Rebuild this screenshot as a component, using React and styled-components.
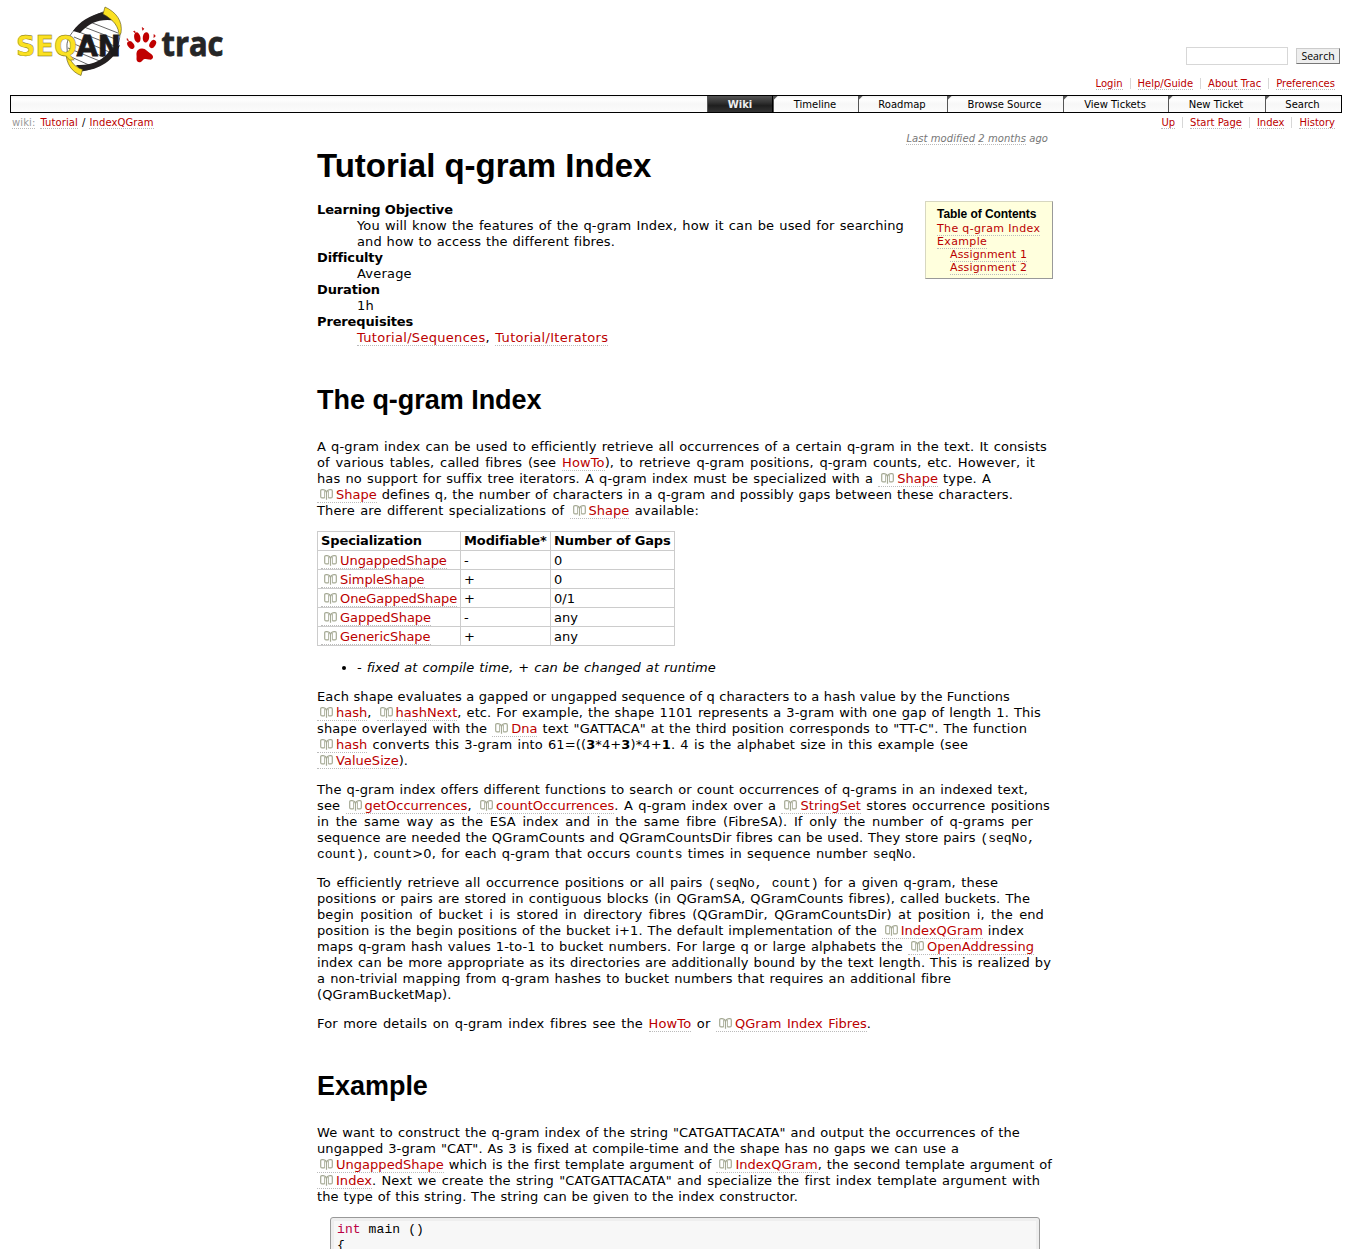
import React from 'react';
import styled, { createGlobalStyle, css } from 'styled-components';

const Global = createGlobalStyle`
  * { box-sizing: border-box; }
  body { margin: 0; background: #fff; color: #000; overflow: hidden; }
`;

const sans = '"DejaVu Sans", "Bitstream Vera Sans", Verdana, sans-serif';
const arial = '"Liberation Sans", Arial, sans-serif';
const mono = '"Liberation Mono", "Courier New", monospace';

const Page = styled.div`
  width: 1352px;
  height: 1249px;
  overflow: hidden;
  font: 13px/16px ${sans};
`;

const A = styled.a`
  color: #b00;
  border-bottom: 1px dotted #bbb;
  text-decoration: none;
`;

/* ---- banner ---- */
const Banner = styled.header`
  display: flex;
  justify-content: space-between;
  height: 95px;
  padding: 0 10px;
`;
const Tools = styled.div`
  display: flex;
  flex-direction: column;
  align-items: flex-end;
  padding-top: 47px;
`;
const SearchForm = styled.form`
  display: flex;
  align-items: center;
  gap: 8px;
  height: 18px;
  margin: 0 2px 13px 0;
`;
const Field = styled.input`
  width: 102px;
  height: 18px;
  border: 1px solid #d7d7d7;
  background: #fff;
  padding: 0;
`;
const Button = styled.button`
  width: 44px;
  height: 16px;
  padding: 0;
  border: 1px solid #ccc;
  border-right-color: #777;
  border-bottom-color: #777;
  background: #eee;
  color: #000;
  font: 10.5px/14px "Open Sans", sans-serif;
`;
const Links = styled.nav`
  display: flex;
  font-size: 10px;
  line-height: 14px;
`;
const LinkItem = styled.span`
  display: block;
  padding: 0 7px;
  height: 11px;
  line-height: 11px;
  border-right: 1px solid #d7d7d7;
  white-space: nowrap;
  &:last-child { border-right: 0; }
`;

/* ---- main navigation ---- */
const MainNav = styled.nav`
  display: flex;
  justify-content: flex-end;
  height: 18px;
  margin: 0 10px;
  border: 1px solid #000;
  background: linear-gradient(#f2f2f2, #fff 3px, #f7f7f7 8px, #fcfcfc);
  font-size: 10px;
  line-height: 15px;
`;
const Tab = styled.a`
  width: ${p => p.$w}px;
  padding: 1px 2px 0 0;
  text-align: center;
  border-left: 1px solid #555;
  background: linear-gradient(135deg, #555 0 2px, transparent 3px);
  ${p => p.$active && css`
    background: linear-gradient(#555, #333 40%, #1f1f1f 60%, #333);
    border-right: 1px solid #000;
    padding-right: 0;
    color: #eee;
    font-weight: bold;
  `}
`;
const SubBar = styled.div`
  display: flex;
  justify-content: space-between;
  height: 18px;
  padding: 4px 10px 0 12px;
  font-size: 10px;
`;
const Crumbs = styled.div`
  line-height: 11px;
  letter-spacing: .1px;
`;
const Muted = styled.span`
  color: #999;
  border-bottom: 1px dotted #bbb;
  margin-right: 5px;
`;
const Slash = styled.span`
  margin: 0 4px;
`;

/* ---- article ---- */
const Article = styled.main`
  width: 1053px;
  padding-left: 317px;
`;
const Modified = styled.div`
  height: 15px;
  padding: 1px 5px 0 0;
  text-align: right;
  font: italic 10px/14px ${sans};
  letter-spacing: .06px;
  color: #777;
`;
const Dotted = styled.span`
  border-bottom: 1px dotted #bbb;
`;
const H1 = styled.h1`
  margin: 0;
  height: 56px;
  font: bold 33px/40px ${arial};
  letter-spacing: -.03px;
  white-space: nowrap;
`;
const H2 = styled.h2`
  margin: 34px 0 19px;
  font: bold 27px/40px ${arial};
  letter-spacing: -.03px;
`;
const Top = styled.section`
  display: flex;
  justify-content: space-between;
  align-items: flex-start;
`;
const Dl = styled.dl`
  margin: 0;
  dt { font-weight: bold; letter-spacing: -.14px; }
  dd { margin: 0 0 0 40px; letter-spacing: .2px; }
`;
const Wide = styled.div`
  letter-spacing: .3px;
  word-spacing: 1px;
`;
const Toc = styled.aside`
  width: 128px;
  height: 78px;
  margin-top: -1px;
  padding: 5px 0 0 11px;
  background: #ffd;
  border: 1px solid;
  border-color: #d7d7c0 #999 #999 #d7d7c0;
  font-size: 11px;
  line-height: 13px;
`;
const TocTitle = styled.h4`
  margin: 0;
  font: bold 12px/15px ${arial};
  letter-spacing: -.06px;
`;
const TocRow = styled.div`
  padding-left: ${p => (p.$sub ? 13 : 0)}px;
  letter-spacing: ${p => (p.$sub ? .15 : .35)}px;
`;
const P = styled.p`
  margin: 0 0 13px;
`;
const Line = styled.span`
  display: block;
  width: ${p => p.$w}px;
  white-space: nowrap;
  text-align-last: justify;
  letter-spacing: .12px;
`;
const Code = styled.code`
  font: 13px/12px ${mono};
  letter-spacing: 0;
`;
const DocLink = styled(A)`
  letter-spacing: .03px;
  svg { margin: 0 3px; vertical-align: -1px; }
`;
const Table = styled.table`
  width: 358px;
  margin: 12px 0 14px;
  table-layout: fixed;
  border-collapse: collapse;
  th, td {
    height: 19px;
    padding: 1px 3px;
    border: 1px solid #ccc;
    text-align: left;
    line-height: 16px;
    white-space: nowrap;
  }
  td { padding: 2px 3px 0; }
  a { letter-spacing: -.05px; }
  th { letter-spacing: -.12px; }
`;
const TableWrap = styled.div`
  margin-top: -1px;
`;
const Col = styled.col`
  width: ${p => p.$w}px;
`;
const Ul = styled.ul`
  margin: 0 0 13px;
  padding-left: 40px;
  font-style: italic;
`;
const Pre = styled.pre`
  width: 710px;
  height: 80px;
  margin: -1px 0 0 13px;
  padding: 4px 6px;
  background: #f7f7f7;
  border: 1px solid #999;
  border-radius: 3px;
  box-shadow: inset 0 0 0 3px #eee;
  font: 13px/16px ${mono};
  letter-spacing: .1px;
`;
const Keyword = styled.span`
  color: #b04;
`;

const Book = () => (
  <svg width="13" height="11" viewBox="0 0 13 11" fill="none" stroke="#a5a994" strokeWidth="1.2">
    <path d="M3.200.700H2C1.100.700.7 1.100.7 2V7.400C.7 8.400 1.100 8.900 2 8.900H4.600M9.800.700H11C11.900.700 12.300 1.100 12.300 2V7.400C12.300 8.400 11.900 8.900 11 8.900H8.400" />
    <path d="M3 .700C4.600.900 6.500 2 6.500 4.500V10.800M10 .700C8.400.900 6.500 2 6.500 4.500" />
    <path d="M4.500 2V9M8.500 2V9" strokeWidth=".8" />
  </svg>
);
const Doc = ({ children }) => <DocLink><Book />{children}</DocLink>;

const LogoSvg = styled.svg`
  display: block;
  overflow: visible;
`;
const Logo = () => (
  <LogoSvg width="220" height="84" viewBox="10 0 220 84">
    <path d="M67 47C66 38 75 23 103 12C115 15 122 22 120 34C119 52 107 66 82 71C72 67 67 59 67 47Z" fill="#fff" stroke="#222" strokeWidth=".7" />
    <path d="M73 31C79 22 90 15 104 12L117 21C103 18 90 21 80 33Z" fill="#231f20" />
    <path d="M120 45C114 60 100 70 81 71L76 65C92 66 104 60 110 50Z" fill="#231f20" />
    <g stroke="#222" strokeWidth=".7">
      <path d="M90 22l28 11M84 27l34 13M79 32l38 15M74 37l40 17M70 42l38 17M68 48l34 14M69 56l20 9" />
    </g>
    <path d="M105 7C116 12 123 21 121 33L119 36C119 27 114 20 103 14Z" fill="#fbe122" stroke="#554d10" strokeWidth=".6" />
    <path d="M66 52C66 64 72 72 81 75.500L82.500 69.500C75 67 70 62 69 54Z" fill="#fbe122" stroke="#554d10" strokeWidth=".6" />
    <g fontFamily="DejaVu Sans, sans-serif" fontWeight="bold" fontSize="28.500">
      <text x="16" y="56" textLength="61" lengthAdjust="spacingAndGlyphs" fill="#fbe122" stroke="#776c10" strokeWidth=".4">SEQ</text>
      <text x="76.500" y="56" textLength="44.500" lengthAdjust="spacingAndGlyphs" fill="#1c1a1b" stroke="#1c1a1b" strokeWidth=".8">AN</text>
    </g>
    <g fill="#c00000">
      <ellipse cx="137.300" cy="37.500" rx="3.100" ry="5.200" transform="rotate(-12 137.300 37.500)" />
      <ellipse cx="146" cy="37.300" rx="3.200" ry="5.200" transform="rotate(8 146 37.300)" />
      <ellipse cx="130.800" cy="45" rx="3" ry="4.300" transform="rotate(-38 130.800 45)" />
      <ellipse cx="152.700" cy="44" rx="3" ry="4.300" transform="rotate(32 152.700 44)" />
      <path d="M142 48.500C146 48.500 147.500 52 150.500 53.500C155 56 153 60.500 149 59.500C146 58.700 144 58.500 142.500 60.500C140.500 63.500 136 62.500 136.500 58.500C136.800 56 136.300 55 136.500 53C137 50 139 48.500 142 48.500Z" />
      <path d="M133.500 31.500l1.300-.5.500 2zM142.200 27.500l1.700 1.300-1.200 1.500zM127.200 38.500l1.300 2-1.400-.3zM154 34.500l1.400 1.500-1.500 1.500z" stroke="#c00000" strokeWidth=".6" />
    </g>
    <text x="161.500" y="56" textLength="62" lengthAdjust="spacingAndGlyphs" fontFamily="Open Sans, sans-serif" fontWeight="bold" fontSize="34" fill="#262626" stroke="#262626" strokeWidth=".8">trac</text>
  </LogoSvg>
);

const shapes = [
  ['UngappedShape', '-', '0'],
  ['SimpleShape', '+', '0'],
  ['OneGappedShape', '+', '0/1'],
  ['GappedShape', '-', 'any'],
  ['GenericShape', '+', 'any'],
];
const tabs = [
  ['Timeline', 85], ['Roadmap', 89], ['Browse Source', 116],
  ['View Tickets', 105], ['New Ticket', 97], ['Search', 76],
];

const LinkList = ({ items }) => (
  <Links>{items.map(t => <LinkItem key={t}><A>{t}</A></LinkItem>)}</Links>
);

export default function App() {
  return (
    <Page>
      <Global />
      <Banner>
        <Logo />
        <Tools>
          <SearchForm><Field /><Button type="button">Search</Button></SearchForm>
          <LinkList items={['Login', 'Help/Guide', 'About Trac', 'Preferences']} />
        </Tools>
      </Banner>
      <MainNav>
        <Tab $active $w={66}>Wiki</Tab>
        {tabs.map(([t, w]) => <Tab key={t} $w={w}>{t}</Tab>)}
      </MainNav>
      <SubBar>
        <Crumbs><Muted>wiki:</Muted><A>Tutorial</A><Slash>/</Slash><A>IndexQGram</A></Crumbs>
        <LinkList items={['Up', 'Start Page', 'Index', 'History']} />
      </SubBar>
      <Article>
        <Modified><Dotted>Last modified</Dotted> <Dotted>2 months</Dotted> ago</Modified>
        <H1>Tutorial q-gram Index</H1>
        <Top>
          <Dl>
            <dt>Learning Objective</dt>
            <dd>
              <Line $w={547}>You will know the features of the q-gram Index, how it can be used for searching</Line>
              <Line $w={258}>and how to access the different fibres.</Line>
            </dd>
            <dt>Difficulty</dt>
            <dd>Average</dd>
            <dt>Duration</dt>
            <dd>1h</dd>
            <dt>Prerequisites</dt>
            <dd><Wide><A>Tutorial/Sequences</A>, <A>Tutorial/Iterators</A></Wide></dd>
          </Dl>
          <Toc>
            <TocTitle>Table of Contents</TocTitle>
            <TocRow><A>The q-gram Index</A></TocRow>
            <TocRow><A>Example</A></TocRow>
            <TocRow $sub><A>Assignment 1</A></TocRow>
            <TocRow $sub><A>Assignment 2</A></TocRow>
          </Toc>
        </Top>

        <H2>The q-gram Index</H2>
        <P>
          <Line $w={730}>A q-gram index can be used to efficiently retrieve all occurrences of a certain q-gram in the text. It consists</Line>
          <Line $w={718}>of various tables, called fibres (see <A>HowTo</A>), to retrieve q-gram positions, q-gram counts, etc. However, it</Line>
          <Line $w={674}>has no support for suffix tree iterators. A q-gram index must be specialized with a <Doc>Shape</Doc> type. A</Line>
          <Line $w={696}><Doc>Shape</Doc> defines q, the number of characters in a q-gram and possibly gaps between these characters.</Line>
          <Line $w={382}>There are different specializations of <Doc>Shape</Doc> available:</Line>
        </P>
        <TableWrap>
          <Table>
            <colgroup><Col $w={143} /><Col $w={90} /><Col $w={124} /></colgroup>
            <thead><tr><th>Specialization</th><th>Modifiable*</th><th>Number of Gaps</th></tr></thead>
            <tbody>
              {shapes.map(([name, mod, gaps]) => (
                <tr key={name}><td><Doc>{name}</Doc></td><td>{mod}</td><td>{gaps}</td></tr>
              ))}
            </tbody>
          </Table>
        </TableWrap>
        <Ul><li><Line $w={359}>- fixed at compile time, + can be changed at runtime</Line></li></Ul>
        <P>
          <Line $w={693}>Each shape evaluates a gapped or ungapped sequence of q characters to a hash value by the Functions</Line>
          <Line $w={724}><Doc>hash</Doc>, <Doc>hashNext</Doc>, etc. For example, the shape 1101 represents a 3-gram with one gap of length 1. This</Line>
          <Line $w={710}>shape overlayed with the <Doc>Dna</Doc> text "GATTACA" at the third position corresponds to "TT-C". The function</Line>
          <Line $w={651}><Doc>hash</Doc> converts this 3-gram into 61=((<b>3</b>*4+<b>3</b>)*4+<b>1</b>. 4 is the alphabet size in this example (see</Line>
          <Line $w={94}><Doc>ValueSize</Doc>).</Line>
        </P>
        <P>
          <Line $w={711}>The q-gram index offers different functions to search or count occurrences of q-grams in an indexed text,</Line>
          <Line $w={733}>see <Doc>getOccurrences</Doc>, <Doc>countOccurrences</Doc>. A q-gram index over a <Doc>StringSet</Doc> stores occurrence positions</Line>
          <Line $w={716}>in the same way as the ESA index and in the same fibre (FibreSA). If only the number of q-grams per</Line>
          <Line $w={718}>sequence are needed the QGramCounts and QGramCountsDir fibres can be used. They store pairs <Code>(seqNo,</Code></Line>
          <Line $w={599}><Code>count)</Code>, <Code>count</Code>&gt;0, for each q-gram that occurs <Code>counts</Code> times in sequence number <Code>seqNo</Code>.</Line>
        </P>
        <P>
          <Line $w={681}>To efficiently retrieve all occurrence positions or all pairs <Code>(seqNo, count)</Code> for a given q-gram, these</Line>
          <Line $w={713}>positions or pairs are stored in contiguous blocks (in QGramSA, QGramCounts fibres), called buckets. The</Line>
          <Line $w={727}>begin position of bucket i is stored in directory fibres (QGramDir, QGramCountsDir) at position i, the end</Line>
          <Line $w={707}>position is the begin positions of the bucket i+1. The default implementation of the <Doc>IndexQGram</Doc> index</Line>
          <Line $w={717}>maps q-gram hash values 1-to-1 to bucket numbers. For large q or large alphabets the <Doc>OpenAddressing</Doc></Line>
          <Line $w={734}>index can be more appropriate as its directories are additionally bound by the text length. This is realized by</Line>
          <Line $w={634}>a non-trivial mapping from q-gram hashes to bucket numbers that requires an additional fibre</Line>
          <Line $w={135}>(QGramBucketMap).</Line>
        </P>
        <P>
          <Line $w={554}>For more details on q-gram index fibres see the <A>HowTo</A> or <Doc>QGram Index Fibres</Doc>.</Line>
        </P>

        <H2>Example</H2>
        <P>
          <Line $w={703}>We want to construct the q-gram index of the string "CATGATTACATA" and output the occurrences of the</Line>
          <Line $w={642}>ungapped 3-gram "CAT". As 3 is fixed at compile-time and the shape has no gaps we can use a</Line>
          <Line $w={735}><Doc>UngappedShape</Doc> which is the first template argument of <Doc>IndexQGram</Doc>, the second template argument of</Line>
          <Line $w={723}><Doc>Index</Doc>. Next we create the string "CATGATTACATA" and specialize the first index template argument with</Line>
          <Line $w={481}>the type of this string. The string can be given to the index constructor.</Line>
        </P>
        <Pre><Keyword>int</Keyword>{' main ()\n{\n'}</Pre>
      </Article>
    </Page>
  );
}
